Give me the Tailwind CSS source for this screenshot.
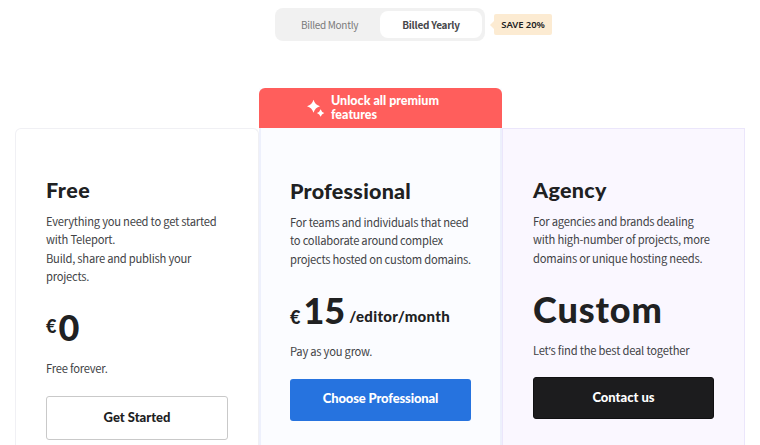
<!DOCTYPE html>
<html lang="en">
<head>
<meta charset="utf-8">
<title>Pricing</title>
<script src="https://cdn.jsdelivr.net/npm/@tailwindcss/browser@4"></script>
</head>
<body class="bg-white w-[760px] h-[445px] overflow-hidden text-[#202122] font-['Lato','Noto_Sans',sans-serif]">
<div class="flex h-[88px] pt-2 pl-[275px] font-['Noto_Sans_CJK_SC',sans-serif]">
  <div class="flex w-[210px] h-[33px] rounded-lg bg-[#f1f1f1] p-[3px] text-[10px] leading-[25px] tracking-[-0.3px]">
    <button class="w-[102px] pl-px text-[#7b7b7b] whitespace-nowrap"><span>Billed Montly</span></button>
    <button class="w-[102px] h-[27px] rounded-lg bg-white font-bold text-[#46474a] tracking-[-0.25px] whitespace-nowrap"><span>Billed Yearly</span></button>
  </div>
  <div class="ml-[5px] mt-1.5 flex h-[21px] items-center">
    <svg class="w-1 h-2" viewBox="0 0 4 8"><path d="M4 0v8L0 4z" fill="#fcebd2"/></svg>
    <span class="w-[58px] h-[21px] rounded-[2px] bg-[#fcebd2] text-center text-[9.5px] leading-[21px] font-semibold tracking-[-0.1px] font-['Noto_Sans',sans-serif] whitespace-nowrap">SAVE 20%</span>
  </div>
</div>
<main class="flex items-end pl-[15px] h-[357px]">
  <section class="w-[244px] h-[317px] rounded-t-md border border-b-0 border-[#f0f0f4] pl-[30px] pt-[49px]">
    <h2 class="h-[27px] text-[21.5px] leading-[25px] font-black tracking-[0.5px]"><span>Free</span></h2>
    <p class="mt-[7px] h-[74px] text-[11.2px] leading-[18.4px] tracking-[-0.23px] text-[#424346] whitespace-nowrap font-['Noto_Sans_CJK_SC',sans-serif]">Everything you need to get started<br>with Teleport.<br>Build, share and publish your<br>projects.</p>
    <div class="mt-[22px] h-[38px] flex items-start font-black"><span class="text-[18px] leading-[36px]">€</span><span class="ml-[2px] text-[36px] leading-[38px]">0</span></div>
    <p class="mt-[13px] h-[18px] text-[11.2px] leading-[18px] tracking-[-0.23px] text-[#424346] font-['Noto_Sans_CJK_SC',sans-serif]">Free forever.</p>
    <button class="mt-[19px] w-[182px] h-[44px] rounded-[3px] border border-[#c9c9c9] text-[13px] leading-[38px] pb-[3px] font-black"><span>Get Started</span></button>
  </section>
  <section class="w-[243px] h-[357px] bg-[#fbfcff]">
    <div class="h-[40px] rounded-t-md bg-[#ff5e5c] flex pl-[48px] pt-[6px] text-white">
      <svg class="w-[18px] h-[18px] mt-[5px]" viewBox="0 0 18 18" fill="currentColor"><path d="M6.5 0.8Q8 6 13 7.3Q8 8.7 6.5 13.8Q5 8.7 0 7.3Q5 6 6.5 .8ZM13.6 10.2Q14.5 13 17.3 14Q14.5 15 13.6 17.8Q12.7 15 9.9 14Q12.7 13 13.6 10.2Z"/></svg>
      <p class="ml-[6px] text-[12.5px] leading-[13.5px] font-black whitespace-nowrap">Unlock all premium<br>features</p>
    </div>
    <div class="h-[317px] border-x-2 border-[#edf0fc] pl-[29px] pt-[50px]">
      <h2 class="h-[27px] text-[21.5px] leading-[26px] font-black tracking-[0.25px]"><span>Professional</span></h2>
      <p class="mt-[8px] h-[56px] text-[11.2px] leading-[18.4px] tracking-[-0.23px] text-[#424346] whitespace-nowrap font-['Noto_Sans_CJK_SC',sans-serif]">For teams and individuals that need<br>to collaborate around complex<br>projects hosted on custom domains.</p>
      <div class="mt-[21px] h-[40px] flex items-baseline font-black whitespace-nowrap"><span class="text-[18px]">€</span><span class="ml-[3px] text-[36px] leading-[40px]">15</span><span class="ml-[4px] text-[15px] leading-[14px] tracking-[0.33px] relative -top-[2px]">/editor/month</span></div>
      <p class="mt-[12px] h-[18px] text-[11.2px] leading-[18px] tracking-[-0.23px] text-[#424346] font-['Noto_Sans_CJK_SC',sans-serif]">Pay as you grow.</p>
      <button class="mt-[19px] w-[181px] h-[42px] rounded-[3px] bg-[#2673df] text-white text-[13px] leading-[38px] pb-[4px] font-black tracking-[-0.15px]"><span>Choose Professional</span></button>
    </div>
  </section>
  <section class="w-[243px] h-[317px] border border-b-0 border-[#ebe6fb] bg-[#faf7ff] pl-[30px] pt-[49px]">
    <h2 class="h-[27px] text-[21.5px] leading-[25px] font-black tracking-[0.3px]"><span>Agency</span></h2>
    <p class="mt-[7px] h-[56px] text-[11.2px] leading-[18.4px] tracking-[-0.23px] text-[#424346] whitespace-nowrap font-['Noto_Sans_CJK_SC',sans-serif]">For agencies and brands dealing<br>with high-number of projects, more<br>domains or unique hosting needs.</p>
    <div class="mt-[22px] h-[40px] text-[36px] leading-[38px] font-black tracking-[0.9px]"><span>Custom</span></div>
    <p class="mt-[11px] h-[18px] text-[11.2px] leading-[18px] tracking-[-0.2px] text-[#424346] whitespace-nowrap font-['Noto_Sans_CJK_SC',sans-serif]">Let<span class="font-['Noto_Sans'] leading-none">’</span>s find the best deal together</p>
    <button class="mt-[18px] w-[181px] h-[42px] rounded-[3px] border border-[#101012] bg-[#1c1c1e] text-white text-[13px] leading-[38px] pb-[2px] font-black"><span>Contact us</span></button>
  </section>
</main>
</body>
</html>
